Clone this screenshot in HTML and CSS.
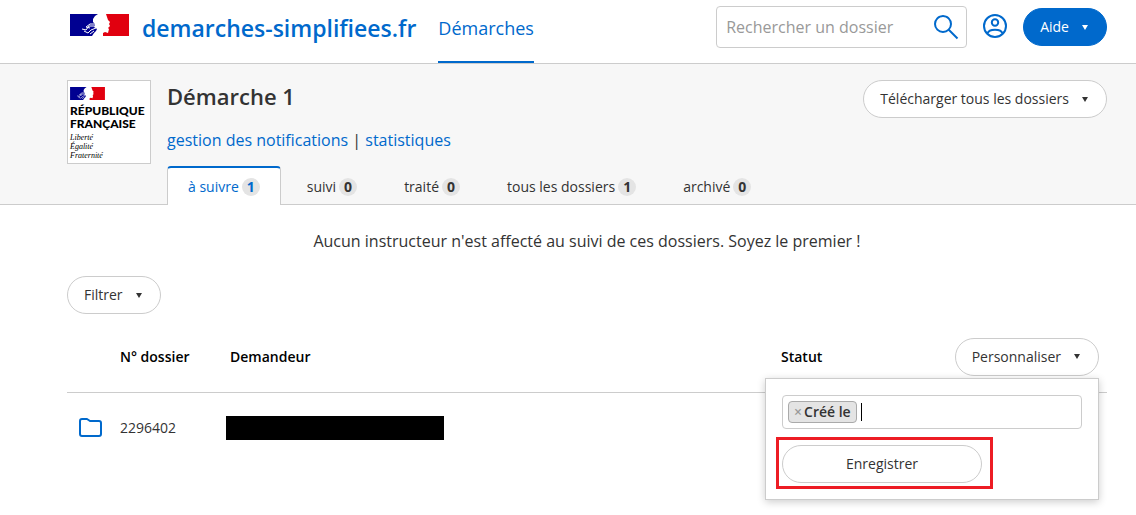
FILE: index.html
```html
<!DOCTYPE html>
<html lang="fr">
<head>
<meta charset="utf-8">
<meta name="viewport" content="width=device-width, initial-scale=1">
<title>Démarche 1 · demarches-simplifiees.fr</title>
<link rel="stylesheet" href="styles.css">
</head>
<body>
<svg width="0" height="0" class="sprite" aria-hidden="true">
  <symbol id="flag" viewBox="0 0 59 22">
    <path fill="#000091" d="M0 0H28L25 2L23 5V8L25 10L24 13L27 15L26 17L24 19L22 22H0Z"/>
    <path fill="#e1000f" d="M36 0H59V22H33V19L35 18L38 19L39 15L38 14L40 12L39 10L40 8L38 6Z"/>
    <path fill="none" stroke="#fff" stroke-width="1" d="M25 10L20 10L16 13M24 12L19 12L16 16L12 15M26 14L21 16L18 19L14 17M24 17L20 20M16 13L20 14"/>
  </symbol>
</svg>
<header class="site-header">
  <div class="container header-inner">
    <a class="brand" href="#"><svg class="brand-flag"><use href="#flag"/></svg><span>demarches-simplifiees.fr</span></a>
    <nav class="main-nav"><a href="#">Démarches</a></nav>
    <form class="search" role="search">
      <input type="text" aria-label="Rechercher un dossier" placeholder="Rechercher un dossier">
      <button type="button" aria-label="Rechercher"><svg width="26" height="26" viewBox="0 0 26 26" fill="none" stroke="#0069cc" stroke-width="2"><circle cx="10" cy="10" r="8"/><path d="M15.500 15.500L24.500 24.500"/></svg></button>
    </form>
    <button class="account" type="button" aria-label="Mon compte"><svg width="24" height="24" viewBox="0 0 24 24" fill="none" stroke="#0069cc" stroke-width="2"><circle cx="12" cy="12" r="11"/><circle cx="12" cy="8.500" r="3.200"/><path d="M4.500 19.500C6 14.500 18 14.500 19.500 19.500"/></svg></button>
    <button class="button primary" type="button">Aide<span class="caret"></span></button>
  </div>
</header>
<main>
  <section class="procedure">
    <div class="container procedure-inner">
      <div class="procedure-logo">
        <svg class="logo-flag"><use href="#flag"/></svg>
        <strong>RÉPUBLIQUE<br>FRANÇAISE</strong>
        <em>Liberté<br>Égalité<br>Fraternité</em>
      </div>
      <div class="procedure-body">
        <h1>Démarche 1</h1>
        <p class="links"><a href="#">gestion des notifications</a> | <a href="#">statistiques</a></p>
        <nav class="tabs">
          <a class="active" href="#">à suivre <span class="badge">1</span></a>
          <a href="#">suivi <span class="badge">0</span></a>
          <a href="#">traité <span class="badge">0</span></a>
          <a href="#">tous les dossiers <span class="badge">1</span></a>
          <a href="#">archivé <span class="badge">0</span></a>
        </nav>
      </div>
      <button class="button download" type="button">Télécharger tous les dossiers<span class="caret"></span></button>
    </div>
  </section>
  <div class="container">
    <p class="notice">Aucun instructeur n'est affecté au suivi de ces dossiers. Soyez le premier !</p>
    <button class="button" type="button">Filtrer<span class="caret"></span></button>
    <table class="files">
      <thead>
        <tr>
          <th class="col-icon"></th>
          <th class="col-number">N° dossier</th>
          <th>Demandeur</th>
          <th class="col-status">Statut</th>
          <th class="col-action">
            <div class="dropdown">
              <button class="button" type="button">Personnaliser<span class="caret"></span></button>
              <form class="menu">
                <label class="tokens"><span class="token"><span class="remove">×</span>Créé le</span><span class="cursor"></span><input type="text" aria-label="Colonnes à afficher"></label>
                <div class="highlight"><button class="button save" type="button">Enregistrer</button></div>
              </form>
            </div>
          </th>
        </tr>
      </thead>
      <tbody>
        <tr>
          <td class="col-icon"><svg width="24" height="20" viewBox="0 0 24 20" fill="none" stroke="#0069cc" stroke-width="2" stroke-linejoin="round"><path d="M3 1H8L11 3H20Q22 3 22 5V16Q22 18 20 18H3Q1 18 1 16V3Q1 1 3 1Z"/></svg></td>
          <td>2296402</td>
          <td><span class="redacted"></span></td>
          <td></td>
          <td></td>
        </tr>
      </tbody>
    </table>
  </div>
</main>
</body>
</html>
```
FILE: styles.css
```css
* { box-sizing: border-box; }
body {
  margin: 0;
  min-height: 100vh;
  font: 16px/24px "Open Sans", "Noto Sans", sans-serif;
  color: #333;
  background: #fff;
}
a { color: #0069cc; text-decoration: none; }
button, input { font: inherit; }
.sprite { position: absolute; }
.container { padding: 0 29px 0 67px; }
.site-header { border-bottom: 1px solid #ccc; }
.header-inner { display: flex; align-items: flex-start; height: 63px; }
.brand {
  display: flex;
  gap: 13px;
  padding: 12px 0 0 3px;
  font-size: 23px;
  line-height: 32px;
  font-weight: 600;
}
.brand-flag { width: 59px; height: 22px; margin-top: 2px; }
.main-nav { margin-left: 22px; align-self: stretch; display: flex; }
.main-nav a { padding-top: 16px; font-size: 18px; border-bottom: 2px solid #0069cc; }
.search {
  display: flex;
  align-items: center;
  width: 251px;
  height: 42px;
  margin: 6px 16px 0 auto;
  padding: 0 7px 0 9px;
  border: 1px solid #ccc;
  border-radius: 4px;
}
.search input { flex: 1; min-width: 0; padding: 0; border: 0; outline: 0; background: none; }
.search input::placeholder { color: #999; opacity: 1; }
.search button, .account { display: flex; padding: 0; border: 0; background: none; }
.account { margin: 14px 16px 0 0; }
.button {
  display: inline-flex;
  align-items: center;
  justify-content: center;
  height: 38px;
  padding: 0 16px;
  border: 1px solid #ccc;
  border-radius: 19px;
  background: #fff;
  color: #333;
  font-size: 14px;
  font-weight: 400;
  line-height: 20px;
  white-space: nowrap;
}
.button.primary { margin-top: 8px; background: #0069cc; border-color: #0069cc; color: #fff; }
.caret {
  margin: 0 2px 0 13px;
  border: 3px solid transparent;
  border-top: 5px solid currentColor;
  border-bottom: 0;
}
.procedure { background: #f7f7f7; border-bottom: 1px solid #ccc; }
.procedure-inner { display: flex; align-items: flex-start; padding-top: 16px; }
.procedure-logo {
  width: 84px;
  height: 84px;
  margin-right: 16px;
  padding: 6px 2px;
  border: 1px solid #ccc;
  background: #fff;
  color: #000;
}
.procedure-logo > * { display: block; }
.logo-flag { width: 35px; height: 13px; }
.procedure-logo strong { margin-top: 4px; font: 900 12px/13px Lato, sans-serif; }
.procedure-logo em { margin-top: 3px; font: italic 8px/9px "Liberation Serif", serif; }
.procedure-body { flex: 1; }
h1 { margin: 0; font-size: 22px; line-height: 32px; font-weight: 600; }
.links { margin: 16px 0 14px; }
.tabs { display: flex; gap: 5px; margin-bottom: -1px; font-size: 14px; line-height: 20px; }
.tabs a {
  display: flex;
  align-items: center;
  gap: 3px;
  height: 39px;
  padding: 0 20px;
  border: 1px solid transparent;
  border-top-width: 2px;
  border-bottom: 0;
  border-radius: 4px 4px 0 0;
  color: #333;
  white-space: nowrap;
}
.tabs .active { background: #fff; border-color: #0069cc #ccc; color: #0069cc; }
.badge {
  width: 18px;
  height: 18px;
  border-radius: 9px;
  background: #e4e4e4;
  font-weight: 700;
  line-height: 18px;
  text-align: center;
}
.notice { margin: 24px 0 23px; text-align: center; }
.files { width: 100%; margin-top: 8px; border-collapse: collapse; font-size: 14px; line-height: 20px; table-layout: fixed; }
th, td { height: 70px; padding: 0; text-align: left; vertical-align: middle; }
td { height: 72px; }
thead tr { border-bottom: 1px solid #ccc; }
th { color: #000; font-weight: 600; }
.col-icon { width: 53px; padding-left: 12px; }
.col-icon svg { display: block; }
.col-number { width: 110px; }
.col-status { width: 164px; }
.col-action { width: 162px; padding-right: 8px; text-align: right; }
.redacted { display: block; width: 218px; height: 24px; margin-left: -4px; background: #000; }
.dropdown { position: relative; display: inline-block; vertical-align: middle; }
.menu {
  position: absolute;
  top: 40px;
  right: 0;
  width: 334px;
  padding: 16px 16px 10px 10px;
  border: 1px solid #ccc;
  background: #fff;
  box-shadow: 0 2px 8px rgba(0, 0, 0, .2);
  color: #333;
  text-align: left;
}
.tokens {
  display: flex;
  align-items: center;
  height: 34px;
  margin-left: 6px;
  padding: 0 5px;
  border: 1px solid #ccc;
  border-radius: 4px;
}
.token {
  padding: 0 5px;
  border: 1px solid #aaa;
  border-radius: 4px;
  background: #e4e4e4;
  white-space: nowrap;
}
.remove { margin-right: 2px; color: #999; }
.cursor { width: 1px; height: 18px; margin-left: 4px; background: #000; }
.tokens input { flex: 1; min-width: 0; padding: 0; border: 0; outline: 0; background: none; }
.highlight { width: 217px; margin-top: 8px; padding: 5px 8px 3px 3px; border: 3px solid #ed1c24; }
.save { width: 100%; }
```
